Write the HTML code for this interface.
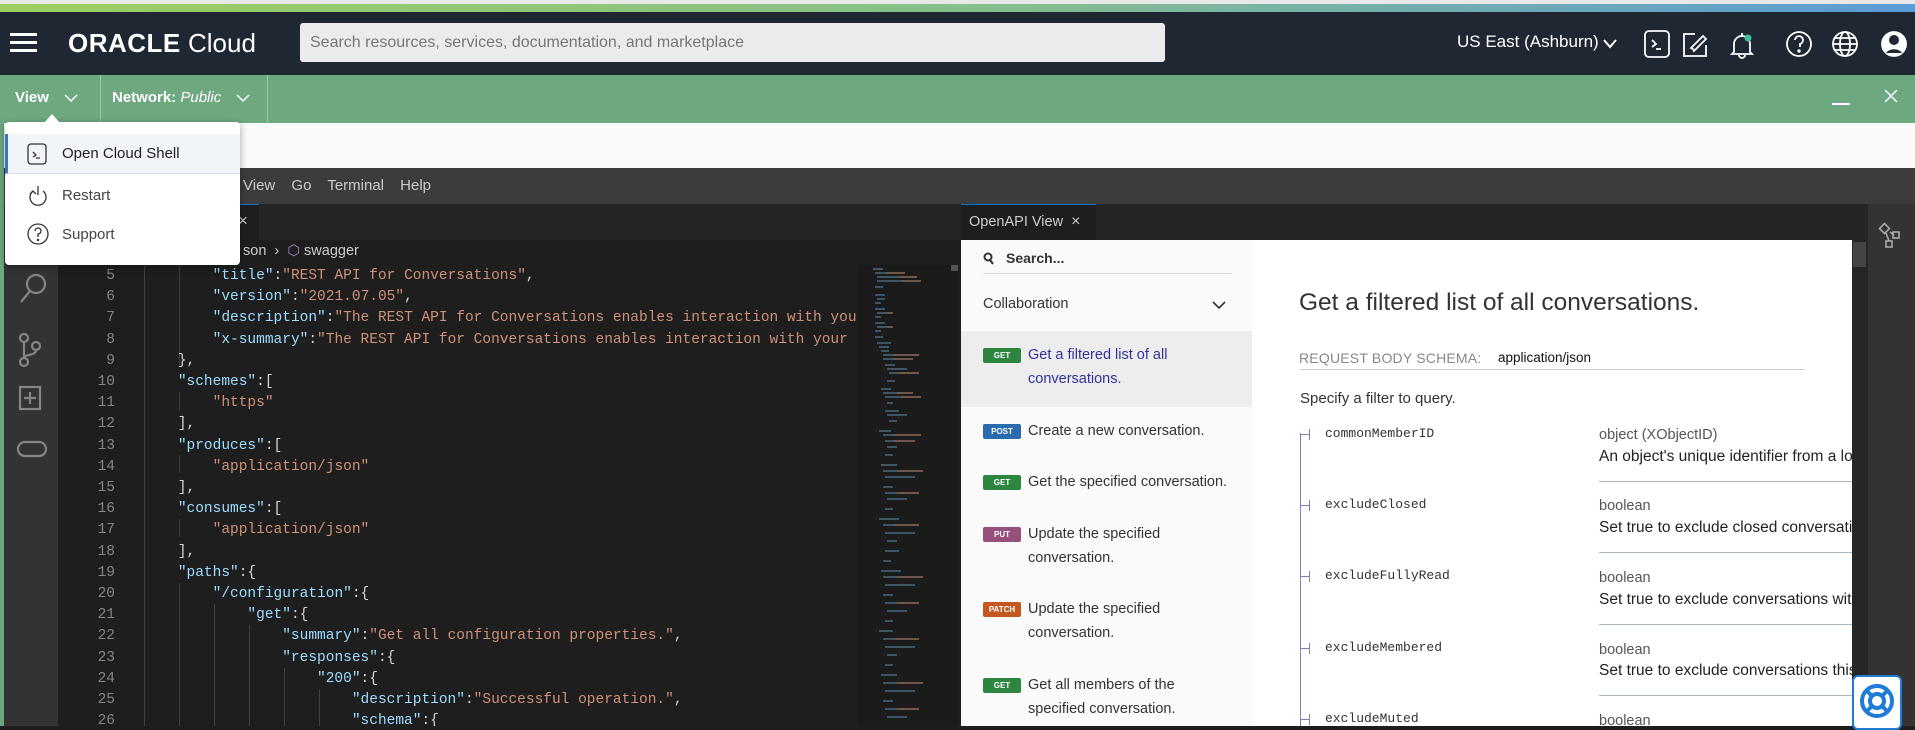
<!DOCTYPE html>
<html><head><meta charset="utf-8"><style>
*{margin:0;padding:0;box-sizing:border-box}
body{width:1915px;height:726px;overflow:hidden;position:relative;font-family:"Liberation Sans",sans-serif;background:#1e1e1e}
.a{position:absolute}
.code{font-family:"Liberation Mono",monospace;font-size:14.5px;white-space:pre;color:#d4d4d4}
.k{color:#9cdcfe}.s{color:#ce9178}
.ln{font-family:"Liberation Mono",monospace;font-size:14.5px;color:#858585;text-align:right;width:60px;left:55px}
.badge{position:absolute;left:983px;width:38px;height:15px;border-radius:2px;color:#fff;font-size:8px;font-weight:bold;text-align:center;line-height:15px}
.nav{position:absolute;left:1028px;font-size:14.5px;color:#333;line-height:24px}
.pn{position:absolute;left:1325px;font-family:"Liberation Mono",monospace;font-size:13px;color:#333}
.tk{position:absolute;left:1300px;width:10px;height:1px;background:#7b7fb8}
.tk:after{content:"";position:absolute;left:9px;top:-5px;width:1px;height:11px;background:#7b7fb8}
.ty{position:absolute;left:1599px;font-size:14.5px;color:#555}
.ds{position:absolute;left:1599px;width:253px;overflow:hidden;font-size:15.5px;color:#222;white-space:nowrap}
.hr{position:absolute;left:1599px;width:253px;height:1px;background:#a9b6c4}
.mm{position:absolute;height:2px;opacity:.6}
</style></head><body>
<!-- top strip -->
<div class="a" style="left:0;top:0;width:1915px;height:4px;background:#e8e8e8"></div>
<div class="a" style="left:0;top:4px;width:1915px;height:8px;background:linear-gradient(90deg,#9ccf5f,#86c08a 50%,#5b9bd6)"></div>
<!-- header -->
<div class="a" style="left:0;top:12px;width:1915px;height:63px;background:#1f2733"></div>
<div class="a" style="left:10px;top:33px;width:27px;height:3px;background:#fff;box-shadow:0 8px 0 #fff,0 16px 0 #fff"></div>
<div class="a" style="left:68px;top:28px;color:#fff;font-size:26px;white-space:nowrap"><b style="letter-spacing:0.5px">ORACLE</b> Cloud</div>
<div class="a" style="left:300px;top:23px;width:865px;height:39px;background:#ebebeb;border-radius:3px;color:#777;font-size:16px;line-height:39px;padding-left:10px">Search resources, services, documentation, and marketplace</div>
<div class="a" style="left:1457px;top:32px;color:#fff;font-size:17px">US East (Ashburn)</div>
<svg class="a" style="left:1602px;top:38px" width="16" height="12"><path d="M2 2l6 7 6-7" stroke="#fff" stroke-width="2" fill="none"/></svg>
<svg class="a" style="left:1643px;top:28px" width="270" height="32" fill="none" stroke="#fff" stroke-width="1.8">
<rect x="2" y="3" width="24" height="26" rx="4"/><path d="M9 12l4 4-4 3M13 21h5"/>
<path d="M52 6h-11v22h22v-11M50 21l-2-1 12-12 3 3-12 12z"/>
<path d="M99 5v3M91 24V16a8 8 0 0 1 16 0v8l2 2H89zM96 27a3 3 0 0 0 6 0"/><circle cx="105" cy="10" r="3.5" fill="#3fbf9c" stroke="none"/>
<circle cx="156" cy="16" r="12"/><path d="M152 12a4 4 0 1 1 5 4v3" /><circle cx="156" cy="23" r="0.8" fill="#fff"/>
<circle cx="202" cy="16" r="12"/><ellipse cx="202" cy="16" rx="5" ry="12"/><path d="M190 16h24M192 10h20M192 22h20"/>
<circle cx="251" cy="16" r="12" fill="#fff"/><circle cx="251" cy="12" r="5" fill="#1f2733" stroke="none"/><path d="M243 25a9 7 0 0 1 16 0" fill="#1f2733" stroke="none"/>
</svg>
<!-- green bar -->
<div class="a" style="left:0;top:75px;width:1915px;height:48px;background:#6ea880"></div>
<div class="a" style="left:0;top:75px;width:4px;height:651px;background:#6ea880"></div>
<div class="a" style="left:15px;top:89px;color:#fff;font-size:15px;font-weight:bold">View</div>
<svg class="a" style="left:64px;top:93px" width="14" height="10"><path d="M1 2l6 6 6-6" stroke="#fff" stroke-width="1.5" fill="none"/></svg>
<div class="a" style="left:100px;top:75px;width:1px;height:48px;background:#9cc7a6"></div>
<div class="a" style="left:112px;top:89px;color:#fff;font-size:15px"><b>Network:</b> <i>Public</i></div>
<svg class="a" style="left:236px;top:93px" width="14" height="10"><path d="M1 2l6 6 6-6" stroke="#fff" stroke-width="1.5" fill="none"/></svg>
<div class="a" style="left:267px;top:75px;width:1px;height:48px;background:#9cc7a6"></div>
<div class="a" style="left:1832px;top:103px;width:18px;height:2px;background:#fff"></div>
<svg class="a" style="left:1883px;top:88px" width="16" height="16"><path d="M2 2l12 12M14 2L2 14" stroke="#fff" stroke-width="1.5"/></svg>
<!-- white band -->
<div class="a" style="left:4px;top:123px;width:1911px;height:45px;background:#fafafa"></div>
<!-- menu bar -->
<div class="a" style="left:4px;top:168px;width:1911px;height:36px;background:#3c3c3c"></div>
<div class="a" style="left:243px;top:177px;color:#ccc;font-size:15px;word-spacing:12px">View Go Terminal Help</div>
<!-- tab bar -->
<div class="a" style="left:58px;top:204px;width:1810px;height:36px;background:#252526"></div>
<div class="a" style="left:58px;top:204px;width:201px;height:36px;background:#1e1e1e;border-top:1px solid #0078d4"></div>
<div class="a" style="left:238px;top:211px;color:#ccc;font-size:17px">×</div>
<div class="a" style="left:961px;top:204px;width:135px;height:36px;background:#1e1e1e;border-top:1px solid #0078d4;color:#ccc;font-size:14.5px;line-height:34px;padding-left:8px">OpenAPI View <span style="font-size:16px;margin-left:4px">×</span></div>
<!-- activity bars -->
<div class="a" style="left:4px;top:204px;width:54px;height:522px;background:#333"></div>
<svg class="a" style="left:16px;top:270px" width="36" height="210" fill="none" stroke="#858585" stroke-width="2.2">
<circle cx="20" cy="14" r="9"/><path d="M14 21L5 32"/>
<circle cx="8" cy="68" r="4"/><circle cx="8" cy="92" r="4"/><circle cx="20" cy="76" r="4"/><path d="M8 72v16M20 80c0 6-12 4-12 8"/>
<rect x="4" y="117" width="20" height="22"/><path d="M14 122v12M8 128h12"/>
<rect x="2" y="172" width="28" height="14" rx="7"/>
</svg>
<!-- breadcrumb -->
<div class="a" style="left:58px;top:240px;width:800px;height:25px;background:#1e1e1e"></div>
<div class="a" style="left:243px;top:243px;color:#ccc;font-size:14.5px">son &nbsp;›&nbsp; <span style="color:#b180d7">⬡</span> swagger</div>
<!-- editor -->
<div class="a" style="left:144px;top:265px;width:1px;height:461px;background:#404040"></div>
<div class="a" style="left:179px;top:265px;width:1px;height:100px;background:#404040"></div>
<div class="a" style="left:179px;top:392px;width:1px;height:18px;background:#404040"></div>
<div class="a" style="left:179px;top:455px;width:1px;height:18px;background:#404040"></div>
<div class="a" style="left:179px;top:519px;width:1px;height:18px;background:#404040"></div>
<div class="a" style="left:179px;top:583px;width:1px;height:143px;background:#404040"></div>
<div class="a" style="left:214px;top:604px;width:1px;height:122px;background:#404040"></div>
<div class="a" style="left:249px;top:625px;width:1px;height:101px;background:#404040"></div>
<div class="a" style="left:284px;top:668px;width:1px;height:58px;background:#404040"></div>
<div class="a" style="left:319px;top:689px;width:1px;height:37px;background:#404040"></div>
<div class="a" style="left:0;top:266px;width:857px;height:460px;overflow:hidden">
<div style="position:relative;line-height:21.2px">
<div class="a ln" style="top:0">5<br>6<br>7<br>8<br>9<br>10<br>11<br>12<br>13<br>14<br>15<br>16<br>17<br>18<br>19<br>20<br>21<br>22<br>23<br>24<br>25<br>26</div>
<div class="a code" style="left:143px;top:0;line-height:21.2px">        <span class="k">"title"</span>:<span class="s">"REST API for Conversations"</span>,
        <span class="k">"version"</span>:<span class="s">"2021.07.05"</span>,
        <span class="k">"description"</span>:<span class="s">"The REST API for Conversations enables interaction with your conversations"</span>
        <span class="k">"x-summary"</span>:<span class="s">"The REST API for Conversations enables interaction with your conversations"</span>
    },
    <span class="k">"schemes"</span>:[
        <span class="s">"https"</span>
    ],
    <span class="k">"produces"</span>:[
        <span class="s">"application/json"</span>
    ],
    <span class="k">"consumes"</span>:[
        <span class="s">"application/json"</span>
    ],
    <span class="k">"paths"</span>:{
        <span class="k">"/configuration"</span>:{
            <span class="k">"get"</span>:{
                <span class="k">"summary"</span>:<span class="s">"Get all configuration properties."</span>,
                <span class="k">"responses"</span>:{
                    <span class="k">"200"</span>:{
                        <span class="k">"description"</span>:<span class="s">"Successful operation."</span>,
                        <span class="k">"schema"</span>:{</div>
</div></div>
<!-- minimap -->
<div class="a" style="left:857px;top:265px;width:101px;height:461px;background:#1b1b1b;overflow:hidden">
<svg width="101" height="461">
<g stroke-width="1.5" opacity=".7">
<path d="M16 4h10M18 8h30M20 12h40M20 16h44M18 22h8M18 30h10M20 34h8M18 38h6M18 44h10M20 48h16M18 52h6M18 58h10M20 62h16M18 66h6M18 72h8M20 78h14M22 82h10M24 86h8M26 90h36M26 94h30M28 100h10M30 104h20M32 108h30M30 116h8M24 124h10M26 128h30M28 132h36M30 138h6M28 146h14M30 150h20M32 156h8M22 166h12M26 170h38M28 176h30M30 182h10M28 190h8M24 200h16M26 206h40M28 212h30M26 222h10M28 228h34M30 234h20M28 244h8M22 254h20M26 260h36M28 268h30M30 276h10M28 286h14M26 296h8M24 306h20M26 312h40M28 320h30M26 330h10M28 338h34M30 346h20M28 356h8M22 366h14M26 374h36M28 382h30M30 390h10M28 400h8M24 410h16M26 418h40M28 426h30M26 436h10M28 444h34M30 452h20" stroke="#5f8aa6"/>
<path d="M30 8h18M40 12h20M44 16h20M30 48h6M30 62h6M36 90h26M36 94h20M40 108h22M40 128h16M44 132h20M36 170h28M36 176h22M40 206h26M40 228h22M38 260h24M40 312h26M40 338h22M38 374h24M40 418h26M40 444h22" stroke="#b07a60"/>
</g></svg></div>
<div class="a" style="left:951px;top:265px;width:7px;height:6px;background:#555"></div>
<!-- dropdown -->
<div class="a" style="left:5px;top:122px;width:235px;height:143px;background:#fff;border-radius:4px;box-shadow:0 2px 8px rgba(0,0,0,.35)"></div>
<div class="a" style="left:44px;top:114px;width:0;height:0;border-left:8px solid transparent;border-right:8px solid transparent;border-bottom:9px solid #fff"></div>
<div class="a" style="left:5px;top:134px;width:235px;height:40px;background:#f1f4f8;border-left:3px solid #3a74c4;border-bottom:1px solid #dde"></div>
<svg class="a" style="left:26px;top:143px" width="22" height="22" fill="none" stroke="#333" stroke-width="1.3"><rect x="2" y="1" width="18" height="20" rx="3"/><path d="M7 9l3 3-3 2M10 15h4"/></svg>
<div class="a" style="left:62px;top:145px;font-size:15px;color:#222">Open Cloud Shell</div>
<svg class="a" style="left:27px;top:184px" width="22" height="22" fill="none" stroke="#333" stroke-width="1.3"><path d="M11 2v9M6 7a8 8 0 1 0 10 0"/><path d="M3 10l3-3 3 3"/></svg>
<div class="a" style="left:62px;top:187px;font-size:15px;color:#444">Restart</div>
<svg class="a" style="left:27px;top:222px" width="22" height="24" fill="none" stroke="#333" stroke-width="1.3"><circle cx="11" cy="12" r="10"/><path d="M8 9a3 3 0 1 1 3 3v3"/><circle cx="11" cy="18" r=".6" fill="#333"/></svg>
<div class="a" style="left:62px;top:226px;font-size:15px;color:#444">Support</div>
<!-- OpenAPI panel -->
<div class="a" style="left:961px;top:240px;width:891px;height:486px;background:#fff"></div>
<div class="a" style="left:961px;top:240px;width:291px;height:486px;background:#fafafa"></div>
<svg class="a" style="left:983px;top:252px" width="12" height="14" fill="none" stroke="#333" stroke-width="2"><circle cx="5" cy="5" r="3.5"/><path d="M7 8l3 4"/></svg>
<div class="a" style="left:1006px;top:250px;font-size:14px;font-weight:bold;color:#333">Search...</div>
<div class="a" style="left:983px;top:273px;width:248px;height:1px;background:#ddd"></div>
<div class="a" style="left:983px;top:296px;font-size:14.5px;color:#333">Collaboration</div>
<svg class="a" style="left:1212px;top:300px" width="14" height="10"><path d="M1 2l6 6 6-6" stroke="#333" stroke-width="1.6" fill="none"/></svg>
<div class="a" style="left:961px;top:331px;width:291px;height:76px;background:#ededed"></div>
<div class="badge" style="top:348px;background:#2e8540">GET</div>
<div class="nav" style="top:343px;color:#32329f">Get a filtered list of all<br>conversations.</div>
<div class="badge" style="top:424px;background:#2a6bb0">POST</div>
<div class="nav" style="top:419px">Create a new conversation.</div>
<div class="badge" style="top:475px;background:#2e8540">GET</div>
<div class="nav" style="top:470px">Get the specified conversation.</div>
<div class="badge" style="top:527px;background:#95507c">PUT</div>
<div class="nav" style="top:522px">Update the specified<br>conversation.</div>
<div class="badge" style="top:602px;background:#c4571f">PATCH</div>
<div class="nav" style="top:597px">Update the specified<br>conversation.</div>
<div class="badge" style="top:678px;background:#2e8540">GET</div>
<div class="nav" style="top:673px">Get all members of the<br>specified conversation.</div>
<div class="a" style="left:1299px;top:289px;font-size:24.5px;color:#333">Get a filtered list of all conversations.</div>
<div class="a" style="left:1299px;top:350px;font-size:14px;color:#888;letter-spacing:0.2px">REQUEST BODY SCHEMA:</div>
<div class="a" style="left:1498px;top:350px;font-size:13.5px;color:#111">application/json</div>
<div class="a" style="left:1300px;top:369px;width:505px;height:1px;background:#ccc"></div>
<div class="a" style="left:1300px;top:390px;font-size:15px;color:#333">Specify a filter to query.</div>
<div class="a" style="left:1300px;top:433px;width:1px;height:293px;background:#7b7fb8"></div>
<div class="tk" style="top:434px"></div><div class="pn" style="top:426px">commonMemberID</div>
<div class="ty" style="top:427px">object (XObjectID)</div><div class="ds" style="top:448px">An object's unique identifier from a lookup</div><div class="hr" style="top:481px"></div>
<div class="tk" style="top:505px"></div><div class="pn" style="top:497px">excludeClosed</div>
<div class="ty" style="top:498px">boolean</div><div class="ds" style="top:519px">Set true to exclude closed conversations</div><div class="hr" style="top:552px"></div>
<div class="tk" style="top:576px"></div><div class="pn" style="top:568px">excludeFullyRead</div>
<div class="ty" style="top:570px">boolean</div><div class="ds" style="top:591px">Set true to exclude conversations with</div><div class="hr" style="top:624px"></div>
<div class="tk" style="top:648px"></div><div class="pn" style="top:640px">excludeMembered</div>
<div class="ty" style="top:642px">boolean</div><div class="ds" style="top:662px">Set true to exclude conversations this</div><div class="hr" style="top:695px"></div>
<div class="tk" style="top:719px"></div><div class="pn" style="top:711px">excludeMuted</div>
<div class="ty" style="top:713px">boolean</div>
<div class="a" style="left:1852px;top:240px;width:16px;height:486px;background:#262626"></div>
<div class="a" style="left:1853px;top:242px;width:13px;height:25px;background:#444"></div>
<div class="a" style="left:1868px;top:204px;width:47px;height:522px;background:#333"></div>
<svg class="a" style="left:1878px;top:222px" width="26" height="28" fill="none" stroke="#aaa" stroke-width="1.6"><rect x="3" y="3" width="7" height="7" transform="rotate(45 6.5 6.5)"/><rect x="15" y="10" width="6" height="6"/><rect x="8" y="19" width="6" height="6"/><path d="M8 11l3 8M12 10l4 3"/></svg>
<!-- help floater -->
<div class="a" style="left:1852px;top:675px;width:50px;height:55px;background:#fff;border:2px solid #1e7bd6;border-radius:6px"></div>
<svg class="a" style="left:1858px;top:682px" width="38" height="38" fill="none" stroke="#1e7bd6" stroke-width="4"><circle cx="19" cy="19" r="15"/><circle cx="19" cy="19" r="7"/><path d="M9 9l5 5M29 9l-5 5M9 29l5-5M29 29l-5-5"/></svg>
</body></html>
